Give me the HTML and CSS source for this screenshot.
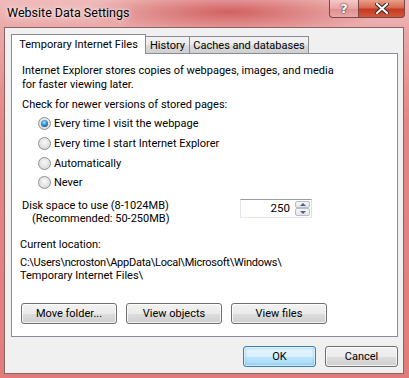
FILE: index.html
```html
<!DOCTYPE html>
<html lang="en">
<head>
  <meta charset="UTF-8" />
  <title>Website Data Settings</title>
  <link rel="stylesheet" href="styles.css">
</head>
<body>

  <div class="window">
    <!-- title bar -->
    <div class="titlebar">
      <div class="title">Website Data Settings</div>
      <div class="caption-buttons">
        <div class="cap-btn help">?</div>
        <div class="cap-btn close">
          <svg width="14" height="11" viewBox="0 0 14 11">
            <path d="M2 1 L12 10 M12 1 L2 10" stroke="#3a2a2a" stroke-width="4" stroke-linecap="square" />
            <path d="M2 1 L12 10 M12 1 L2 10" stroke="#fff" stroke-width="2" stroke-linecap="square" />
          </svg>
        </div>
      </div>
    </div>

    <!-- client area -->
    <div class="client">
      <div class="tabs">
        <div class="tab active tab-files">Temporary Internet Files</div>
        <div class="tab tab-history">History</div>
        <div class="tab tab-caches">Caches and databases</div>
      </div>

      <div class="panel">
        <p class="intro">Internet Explorer stores copies of webpages, images, and media<br>for faster viewing later.</p>

        <p class="check-label">Check for newer versions of stored pages:</p>
        <div class="radios">
          <div class="radio-row"><span class="radio checked"></span>Every time I visit the webpage</div>
          <div class="radio-row"><span class="radio"></span>Every time I start Internet Explorer</div>
          <div class="radio-row"><span class="radio"></span>Automatically</div>
          <div class="radio-row"><span class="radio"></span>Never</div>
        </div>

        <div class="disk-row">
          <div class="disk-label">
            <div>Disk space to use (8-1024MB)</div>
            <div class="recommended">(Recommended: 50-250MB)</div>
          </div>
          <div class="spinbox">
            <div class="spin-value">250</div>
            <div class="spin-buttons">
              <div class="spin-btn"><span class="arrow-up"></span></div>
              <div class="spin-btn"><span class="arrow-down"></span></div>
            </div>
          </div>
        </div>

        <p class="location-label">Current location:</p>
        <p class="location-path"><span class="path-tight">C:\Users\ncroston\AppData\Local\Microsoft\Windows\</span><br>Temporary Internet Files\</p>

        <div class="panel-buttons">
          <div class="btn">Move folder...</div>
          <div class="btn">View objects</div>
          <div class="btn">View files</div>
        </div>
      </div>

      <div class="dialog-buttons">
        <div class="btn btn-small default">OK</div>
        <div class="btn btn-small">Cancel</div>
      </div>
    </div>
  </div>

</body>
</html>
```
FILE: styles.css
```css
/* reset */
* {
  margin: 0;
  padding: 0;
  box-sizing: border-box;
}

body {
  font-family: Roboto, "Liberation Sans", sans-serif;
  font-size: 11px;
  color: #000;
  width: 409px;
  height: 378px;
  overflow: hidden;
  background-color: #e6a0a0;
  background-image:
    radial-gradient(ellipse 150px 22px at 230px 12px, rgba(200, 70, 70, 0.75), rgba(200, 70, 70, 0) 100%),
    linear-gradient(to bottom, #f0baba 0px, #eaa8a8 30px, #e48686 120px, #e07c7c 378px);
}

/* window */
.window {
  display: flex;
  flex-direction: column;
  height: 378px;
}

.titlebar {
  display: flex;
  height: 27px;
  padding-left: 7px;
  padding-right: 4px;
}

.title {
  font-size: 12.5px;
  line-height: 26px;
  color: #000;
  text-shadow: 0 0 8px rgba(255, 255, 255, 0.9), 0 0 3px rgba(255, 255, 255, 0.9);
}

.caption-buttons {
  display: flex;
  margin-left: auto;
  height: 18px;
}

.cap-btn {
  display: flex;
  align-items: center;
  justify-content: center;
  height: 18px;
  border: 1px solid #7a4848;
  border-top: none;
}

.help {
  width: 29px;
  border-right: none;
  border-radius: 0 0 0 4px;
  background: linear-gradient(to bottom, #f6c8c8 0%, #eaa4a4 50%, #e08e8e 51%, #eaa6a6 100%);
  color: #fff;
  font: bold 13px "DejaVu Sans", sans-serif;
  text-shadow: 0 0 2px #3a2a2a, 0 0 1px #3a2a2a;
}

.close {
  width: 47px;
  border-radius: 0 0 4px 0;
  background: linear-gradient(to bottom, #e8a08a 0%, #d86a50 45%, #c43a22 55%, #d2583e 100%);
}

/* client area */
.client {
  display: flex;
  flex-direction: column;
  width: 400px;
  height: 347px;
  margin-left: 4px;
  background-color: #f0f0f0;
  border: 1px solid #8c6262;
  padding: 6px 6px 0 6px;
}

/* tabs */
.tabs {
  display: flex;
  align-items: flex-end;
  height: 19px;
  position: relative;
  z-index: 1;
}

.tab {
  display: flex;
  align-items: center;
  justify-content: center;
  height: 17px;
  border: 1px solid #898c95;
  border-bottom: none;
  background: linear-gradient(to bottom, #f2f2f2 0%, #ebebeb 50%, #dddddd 51%, #cfcfcf 100%);
  margin-left: -1px;
}

.tab.active {
  height: 20px;
  margin-bottom: -1px;
  margin-left: 0;
  background: #fff;
  padding-bottom: 1px;
}

.tab-files {
  width: 135px;
}

.tab-history {
  width: 45px;
}

.tab-caches {
  width: 120px;
}

/* panel */
.panel {
  width: 387px;
  height: 284px;
  background-color: #fff;
  border: 1px solid #898c95;
  padding: 10px 10px 0 10px;
}

.intro {
  line-height: 13.5px;
}

.check-label {
  margin-top: 7px;
  line-height: 14px;
}

.radios {
  margin-top: 2px;
  padding-left: 16px;
}

.radio-row {
  display: flex;
  align-items: center;
  height: 19.7px;
}

.radio {
  width: 13px;
  height: 13px;
  border-radius: 50%;
  border: 1px solid #8e8f8f;
  background: radial-gradient(circle at 50% 40%, #fafafa 0%, #e6e6e6 45%, #cfcfcf 100%);
  margin-right: 3px;
  display: flex;
  align-items: center;
  justify-content: center;
  flex-shrink: 0;
}

.radio.checked::after {
  content: "";
  width: 7px;
  height: 7px;
  border-radius: 50%;
  background: radial-gradient(circle at 45% 35%, #a8e4fc 0%, #3c9ad8 40%, #1a5d92 75%, #0e3c66 100%);
}

/* disk space */
.disk-row {
  display: flex;
  margin-top: 6px;
}

.disk-label {
  width: 218px;
  line-height: 13.5px;
}

.recommended {
  padding-left: 10px;
}

.spinbox {
  display: flex;
  width: 72px;
  height: 19px;
  border: 1px solid #abadb3;
  border-top-color: #9a9ca2;
  border-left-color: #e2e3ea;
  border-right-color: #dbdfe6;
  border-bottom-color: #e3e9ef;
  background-color: #fff;
}

.spin-value {
  flex: 1;
  text-align: right;
  padding-right: 5px;
  line-height: 17px;
  font-size: 11.5px;
}

.spin-buttons {
  display: flex;
  flex-direction: column;
  width: 16px;
  padding: 1px 1px 1px 0;
}

.spin-btn {
  flex: 1;
  display: flex;
  align-items: center;
  justify-content: center;
  border: 1px solid #b8bcc4;
  border-radius: 2px;
  background: linear-gradient(to bottom, #f6f6f6, #e4e6ea);
}

.arrow-up {
  width: 0;
  height: 0;
  border-left: 3px solid transparent;
  border-right: 3px solid transparent;
  border-bottom: 3px solid #4d6185;
}

.arrow-down {
  width: 0;
  height: 0;
  border-left: 3px solid transparent;
  border-right: 3px solid transparent;
  border-top: 3px solid #4d6185;
}

/* location */
.location-label {
  margin-top: 12px;
  line-height: 14px;
  margin-left: -2px;
}

.location-path {
  margin-top: 4px;
  line-height: 13px;
  margin-left: -2px;
}

.path-tight {
  letter-spacing: -0.25px;
}

/* buttons */
.panel-buttons {
  display: flex;
  gap: 9px;
  margin-top: 21px;
  margin-left: -1px;
}

.btn {
  display: flex;
  align-items: center;
  justify-content: center;
  width: 96px;
  height: 21px;
  border: 1px solid #707070;
  border-radius: 3px;
  background: linear-gradient(to bottom, #f2f2f2 0%, #ebebeb 50%, #dddddd 51%, #cfcfcf 100%);
  box-shadow: inset 0 0 0 1px rgba(255, 255, 255, 0.75);
}

.dialog-buttons {
  display: flex;
  justify-content: flex-end;
  gap: 9px;
  margin-top: 9px;
  margin-right: -1px;
}

.btn-small {
  width: 73px;
}

.btn.default {
  border-color: #3c7fb1;
  background: linear-gradient(to bottom, #eaf6fd 0%, #d9f0fc 50%, #bee6fd 51%, #a7d9f5 100%);
  box-shadow: inset 0 0 0 1px rgba(255, 255, 255, 0.6), inset 0 0 3px 1px rgba(72, 180, 240, 0.6);
}
```
